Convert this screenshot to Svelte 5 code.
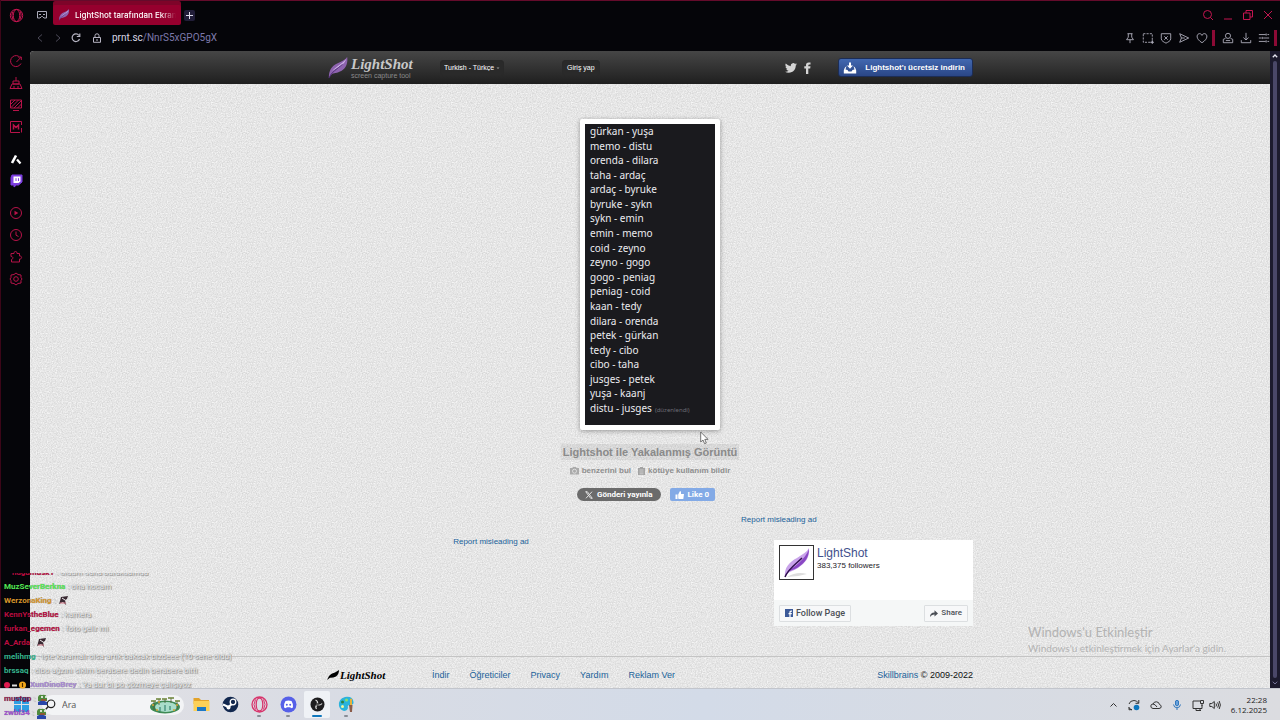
<script>
  const lines = [
    'gürkan - yuşa', 'memo - distu', 'orenda - dilara', 'taha - ardaç', 'ardaç - byruke',
    'byruke - sykn', 'sykn - emin', 'emin - memo', 'coid - zeyno', 'zeyno - gogo',
    'gogo - peniag', 'peniag - coid', 'kaan - tedy', 'dilara - orenda', 'petek - gürkan',
    'tedy - cibo', 'cibo - taha', 'jusges - petek', 'yuşa - kaanj', 'distu - jusges'
  ];

  const chat = [
    { name: 'hagumusk1', tone: 'crimson', text: 'oldum sana buraksamda', lead: true },
    { name: 'MuzSeverBerkna', tone: 'green', text: 'oha hocam' },
    { name: 'WerzonaKing', tone: 'orange', emote: 'gun' },
    { name: 'KennYstheBlue', tone: 'crimson', text: 'kamera' },
    { name: 'furkan_egemen', tone: 'crimson', text: 'foto gelir mi' },
    { name: 'A_Arda', tone: 'crimson', emote: 'gun' },
    { name: 'melihmg', tone: 'teal', text: 'işte karamalı olsa artık baksak bizdeee (10 sene oldu)' },
    { name: 'brssaq', tone: 'teal', text: 'cibo ağzını sikim berabere dedin berabere bitti' },
    { name: 'XunDinoBrey', tone: 'violet', text: 'Ya dur bi po çözmeye çalışıyoz', badges: true },
    { name: 'mustgp', tone: 'wine', emote: 'frog' },
    { name: 'zwbl34', tone: 'purple', emote: 'frog' }
  ];

  const footerLinks = ['İndir', 'Öğreticiler', 'Privacy', 'Yardım', 'Reklam Ver'];
  const sidebar = [
    ['speed', 'cleaner', 'wallpaper', 'mods'],
    ['aria', 'twitch'],
    ['player', 'history', 'extensions', 'settings']
  ];
  const tools = ['pin', 'snapshot', 'shield', 'send', 'heart'];
  const apps = [
    { id: 'folder' }, { id: 'steam' }, { id: 'opera', open: true }, { id: 'discord', open: true },
    { id: 'obs', open: true, active: true }, { id: 'paint', open: true }
  ];
</script>

{#snippet feather(size)}
  <svg width={size} height={size} viewBox="0 0 24 24" aria-hidden="true">
    <path d="M2 23 C2 14 5 10 11 7 C16 5 20 3 22 0 C23 6 21 12 16 15 C11 18 7 17 5 19 Z" fill="#8d63ae" />
    <path d="M5 16 C9 11 16 8 21 2 C19 8 14 11 6 15 Z" fill="#cdb2e6" />
    <path d="M2 23 C5 16 11 13 17 8" fill="none" stroke="#4b2a72" stroke-width="1" />
  </svg>
{/snippet}

{#snippet icon(id)}
  <svg class="ic" width="14" height="14" viewBox="0 0 14 14" aria-hidden="true">
    {#if id === 'speed'}
      <path d="M12 9.500 A5.500 5.500 0 1 1 9.600 2.200 M7.500 8 L12 3.200 M9 3 H12.300 V6" />
    {:else if id === 'cleaner'}
      <path d="M7 1 V5 M4 5 H10 V8 H4 Z M3 8 H11 L13 12.500 H1 Z M5 10 V12 M9 10 V12" />
    {:else if id === 'wallpaper'}
      <path d="M1.500 2 H12.500 V10 H1.500 Z M4 12.500 H10 M2 6 L6 2 M2 9.500 L9.500 2 M5 10 L12.500 2.500 M8.500 10 L12.500 6" />
    {:else if id === 'mods'}
      <path d="M11 12.500 H1.500 V1.500 H12.500 V5 M12.500 8 V12.500" /><path d="M4.500 9.500 V5 L7 7.500 L9.500 5 V9.500" stroke-width="1.500" />
    {:else if id === 'aria'}
      <path d="M3 11 L7 3.500" stroke="#fff" stroke-width="2.600" /><path d="M8 7.500 L11.500 11.500" stroke="#fff" stroke-width="2.200" />
    {:else if id === 'twitch'}
      <path d="M3 1 H13 V8 L9.500 11 H7.500 L5 13 V11 H2 V3.500 Z" fill="#7d3fe0" stroke="#7d3fe0" /><path d="M4.500 2.500 H11.500 V7.500 L9.500 9 H4.500 Z" fill="#fff" stroke="none" /><path d="M7 4.200 V7 M9.500 4.200 V7" stroke="#7d3fe0" />
    {:else if id === 'player'}
      <circle cx="7" cy="7" r="5.500" /><path d="M5.500 4.700 L9.300 7 L5.500 9.300 Z" fill="currentColor" stroke="none" />
    {:else if id === 'history'}
      <circle cx="7" cy="7" r="5.500" /><path d="M7 3.500 V7.200 L9.500 8.500" />
    {:else if id === 'extensions'}
      <path d="M2 3.500 H5 C4.500 .8 8.500 .8 8 3.500 H10.500 V6 C13.300 5.600 13.300 9.400 10.500 9 V12 H2.500 V9.500 C4.600 8.800 4.300 6.500 2 6.500 Z" />
    {:else if id === 'settings'}
      <path d="M5 2.500 L7 1 L9 2.500 L12 3 V5.500 L13 7 L12 8.500 V11 L9 11.500 L7 13 L5 11.500 L2 11 V8.500 L1 7 L2 5.500 V3 Z" /><circle cx="7" cy="7" r="2.300" />
    {:else if id === 'pin'}
      <path d="M4 2 H10 M5 2 V6 L3 9 H11 L9 6 V2 M7 9 V13" />
    {:else if id === 'snapshot'}
      <path d="M1.500 2 H12 V12 H1.500 Z" stroke-dasharray="2.500 1.300" /><path d="M12 9.500 V14 M9.800 12 H14" />
    {:else if id === 'shield'}
      <path d="M1.500 2 H12.500 V8 C12.500 10.500 9 12 7 13 C5 12 1.500 10.500 1.500 8 Z M5 5 L9 9 M9 5 L5 9" />
    {:else if id === 'send'}
      <path d="M2 2 L12.500 7 L2 12 L4 7 Z M4 7 H8" />
    {:else if id === 'heart'}
      <path d="M7 12.500 C-2 7 1.500 1 5 2 Q6.500 2.500 7 4 Q7.500 2.500 9 2 C12.500 1 16 7 7 12.500 Z" />
    {:else if id === 'profile'}
      <circle cx="7" cy="4.500" r="3" /><path d="M4 7.500 L1.500 8.500 V12.500 H12.500 V8.500 L10 7.500 M4.500 10 H9.500" />
    {:else if id === 'download'}
      <path d="M7 1 V9 M4 6.500 L7 9.300 L10 6.500 M1.500 9.500 V12.500 H12.500 V9.500" />
    {:else if id === 'menu'}
      <path d="M1 3 H9 M11 3 H13 M1 7 H4 M6 7 H13 M1 11 H9 M11 11 H13 M9.500 1.700 V4.300 M5 5.700 V8.300 M9.500 9.700 V12.300" />
    {/if}
  </svg>
{/snippet}

<div class="desktop">
  <div class="browser">
    <div class="titlebar">
      <button class="bare opera" aria-label="Menu">
        <svg width="15" height="15" viewBox="0 0 15 15"><circle cx="7.500" cy="7.500" r="6.200" /><ellipse cx="7.500" cy="7.500" rx="3.200" ry="6" /><path d="M3.500 4 Q2 7.500 4 11.500 M11.500 3.500 Q13 7.500 11 11.500" /></svg>
      </button>
      <button class="bare space" aria-label="Workspaces">
        <svg width="12" height="12" viewBox="0 0 12 12"><path d="M1.500 2.500 H10.500 V9 H8 L6.500 7.500 H5.500 L4 9 H1.500 Z M3 5.500 H5 M7 5.500 H9" /></svg>
      </button>
      <div class="tab">
        {@render feather(12)}
        <span class="tab-title">LightShot tarafından Ekran</span>
      </div>
      <button class="bare plus" aria-label="New tab"><svg width="7" height="7" viewBox="0 0 7 7"><path d="M3.500 0V7M0 3.500H7" /></svg></button>
      <div class="window-buttons">
        <button class="bare" aria-label="Search tabs"><svg width="12" height="12" viewBox="0 0 12 12"><circle cx="5.500" cy="5.500" r="4" /><path d="M8.500 8.500 L11 11" /></svg></button>
        <button class="bare" aria-label="Minimise"><svg width="12" height="12" viewBox="0 0 12 12"><path d="M2 10 H10" /></svg></button>
        <button class="bare" aria-label="Restore"><svg width="12" height="12" viewBox="0 0 12 12"><path d="M1.500 4 H8 V10.500 H1.500 Z M4 4 V1.500 H10.500 V8 H8" /></svg></button>
        <button class="bare" aria-label="Close"><svg width="12" height="12" viewBox="0 0 12 12"><path d="M2 2 L10 10 M10 2 L2 10" /></svg></button>
      </div>
    </div>

    <div class="toolbar">
      <button class="bare dim" aria-label="Back"><svg width="10" height="10" viewBox="0 0 10 10"><path d="M7 1.500 L3 5 L7 8.500" /></svg></button>
      <button class="bare dim" aria-label="Forward"><svg width="10" height="10" viewBox="0 0 10 10"><path d="M3 1.500 L7 5 L3 8.500" /></svg></button>
      <button class="bare" aria-label="Reload"><svg width="10" height="10" viewBox="0 0 10 10"><path d="M8.500 6 A3.800 3.800 0 1 1 8 2.500 M8.800 .5 V3.500 H5.800" stroke-width="1.200" /></svg></button>
      <button class="bare lock" aria-label="Site information"><svg width="10" height="10" viewBox="0 0 10 10"><path d="M1.500 4.500 H8.500 V9.300 H1.500 Z M3 4.500 V2.500 Q3 .8 5 .8 Q7 .8 7 2.500 V4.500 M5 6 V8" /></svg></button>
      <button class="bare address" aria-label="Address">prnt.sc<span>/NnrS5xGPO5gX</span></button>
      <div class="tools">
        {#each tools as id}<button class="bare" aria-label={id}>{@render icon(id)}</button>{/each}
        <i class="mark"></i>
        {#each ['profile', 'download', 'menu'] as id}<button class="bare" aria-label={id}>{@render icon(id)}</button>{/each}
        <i class="mark"></i>
      </div>
    </div>

    <div class="body">
      <nav class="sidebar" aria-label="Sidebar">
        {#each sidebar as group}
          <div class="group">
            {#each group as id}<button class="bare" aria-label={id}>{@render icon(id)}</button>{/each}
          </div>
        {/each}
      </nav>

      <div class="page">
        <header>
          <div class="wrap head">
            <a class="logo" href="#home">
              {@render feather(24)}
              <span class="words"><b>LightShot</b><small>screen capture tool</small></span>
            </a>
            <div class="language">
              <select aria-label="Language"><option>Turkish - Türkçe</option></select>
              <svg width="4" height="4" viewBox="0 0 4 4"><path d="M.5 1.500 H3.500 L2 3 Z" fill="#999" /></svg>
            </div>
            <button class="sign-in">Giriş yap</button>
            <div class="social">
              <a href="#twitter" aria-label="Twitter"><svg width="12" height="12" viewBox="0 0 24 24"><path fill="#d5d5d5" d="M23.900 4.600a10 10 0 0 1-2.800.8 4.900 4.900 0 0 0 2.100-2.700 9.900 9.900 0 0 1-3.100 1.200 4.900 4.900 0 0 0-8.400 4.500A14 14 0 0 1 1.600 3.200a4.900 4.900 0 0 0 1.500 6.500 4.900 4.900 0 0 1-2.200-.6v.1a4.900 4.900 0 0 0 3.900 4.800 5 5 0 0 1-2.200.1 4.900 4.900 0 0 0 4.600 3.400A9.900 9.900 0 0 1 0 19.500a14 14 0 0 0 7.500 2.200c9.100 0 14-7.500 14-14v-.6a10 10 0 0 0 2.400-2.500z" /></svg></a>
              <a href="#facebook" aria-label="Facebook"><svg width="7" height="12" viewBox="0 0 7 12"><path fill="#d5d5d5" d="M2 12V6.500H.3V4.300H2V3Q2 .5 4.600.5H6.500V2.600H5.200Q4.300 2.600 4.300 3.400V4.300H6.500L6.200 6.500H4.300V12Z" /></svg></a>
            </div>
            <a class="get" href="#download">
              <svg width="14" height="12" viewBox="0 0 14 12"><path fill="#fff" d="M6 0.500H8V3.500H10L7 6.800L4 3.500H6ZM3.500 4Q1 6 .8 8.500V11.500H13.200V8.500Q13 6 10.500 4L11.500 7.500L9.500 8L8.500 9.500H5.500L4.500 8L2.500 7.500Z" /></svg>
              <span>Lightshot'ı ücretsiz indirin</span>
            </a>
          </div>
        </header>

        <main>
          <div class="shot">
            <ul>
              {#each lines as line, i}
                <li>{line}{#if i === lines.length - 1}<small>(düzenlendi)</small>{/if}</li>
              {/each}
            </ul>
          </div>
          <h1>Lightshot ile Yakalanmış Görüntü</h1>
          <div class="actions">
            <a href="#similar"><svg width="9" height="8" viewBox="0 0 9 8"><path d="M0 1H2.500L3 0H6L6.500 1H9V7.500H0Z" fill="#aaa" /><circle cx="4.500" cy="4.200" r="2" fill="none" stroke="#ddd" /></svg>benzerini bul</a>
            <a href="#abuse"><svg width="7" height="8" viewBox="0 0 7 8"><path d="M0 1H2V0H5V1H7V8H0Z" fill="#a3a3a3" /><path d="M1.500 3H5.500M1.500 5H5.500M1.500 6.800H5.500" stroke="#d5d5d5" stroke-width=".8" /></svg>kötüye kullanım bildir</a>
          </div>
          <div class="share-row">
            <button class="post"><svg width="8" height="8" viewBox="0 0 8 8"><path d="M.7.7H2.300L7.300 7.300H5.700Z M7 .7L4.500 3.500M3.400 4.600L1 7.300" fill="none" stroke="#fff" stroke-width=".8" /></svg>Gönderi yayınla</button>
            <button class="like"><svg width="10" height="10" viewBox="0 0 10 10"><path fill="#fff" d="M.5 4.500H2.500V9H.5ZM3.200 4.500L5 1Q6.300 1 6 4H9L8.300 9H4L3.200 8.400Z" /></svg>Like 0</button>
          </div>

          <div class="wrap lower">
            <a class="report first" href="#report-left">Report misleading ad</a>
            <aside>
              <a class="report" href="#report-right">Report misleading ad</a>
              <section class="fb">
                <div class="fb-top">
                  <div class="avatar">
                    <svg width="33" height="33" viewBox="0 0 33 33">
                      <path d="M7 31 Q17 25 27 28 Q17 31 7 31Z" fill="#ddd" />
                      <path d="M5 31 C4 22 9 16 17 12 C23 8 27 6 29 2 C30 12 25 17 18 22 C12 26 8 25 5 31Z" fill="#c9a3ea" />
                      <path d="M7 26 C14 21 25 14 29 3 C29 13 23 19 15 23Z" fill="#8a48c4" />
                      <path d="M5 31 C8 23 16 18 22 12" fill="none" stroke="#30104d" stroke-width="1.500" />
                    </svg>
                  </div>
                  <div class="fb-name"><a href="#page">LightShot</a><span>383,375 followers</span></div>
                </div>
                <div class="fb-bottom">
                  <button class="follow"><svg width="8" height="8" viewBox="0 0 8 8"><path fill="#3b5998" d="M0 0H8V8H0Z" /><path d="M5 8V3.200Q5 2 7 2.200M3.500 4.600H6.800" fill="none" stroke="#fff" stroke-width="1.200" /></svg>Follow Page</button>
                  <button class="share"><svg width="8" height="7" viewBox="0 0 8 7"><path fill="#4b4f56" d="M0 7Q0 2.500 4.500 2.500V.3L8 3.500L4.500 6.500V4.500Q1.500 4.300 0 7Z" /></svg>Share</button>
                </div>
              </section>
            </aside>
          </div>
        </main>

        <footer>
          <div class="wrap foot">
            <a class="foot-logo" href="#top">
              <svg width="12" height="10" viewBox="0 0 12 10"><path d="M0 10L2 6Q4 3 8 2.500L12 0Q12 4 9 6.500Q6 8 3 7.800Z" fill="#000" /></svg>
              <b>LightShot</b>
            </a>
            <nav>{#each footerLinks as label}<a href="#{label}">{label}</a>{/each}</nav>
            <p><a href="#skillbrains">Skillbrains</a> © 2009-2022</p>
          </div>
        </footer>
      </div>

      <div class="scrollbar" aria-hidden="true">
        <svg width="6" height="4" viewBox="0 0 6 4"><path d="M.8 3.300L3 1L5.200 3.300" stroke="#e5e5f0" stroke-width="1.300" /></svg>
        <i></i>
        <svg width="6" height="4" viewBox="0 0 6 4"><path d="M.8 .7L3 3L5.200 .7" stroke="#77759a" /></svg>
      </div>
    </div>
  </div>

  <div class="taskbar">
    <button class="bare start" aria-label="Start"><svg width="15" height="15" viewBox="0 0 15 15"><path d="M0 0H7V7H0ZM8 0H15V7H8ZM0 8H7V15H0ZM8 8H15V15H8Z" fill="#2f9fe3" /></svg></button>
    <div class="search">
      <svg width="11" height="11" viewBox="0 0 11 11"><circle cx="6" cy="4.800" r="3.800" fill="none" stroke="#222" stroke-width="1.200" /><path d="M3.300 7.500L.8 10.300" stroke="#222" stroke-width="1.300" /></svg>
      <input aria-label="Ara" placeholder="Ara" />
      <svg width="33" height="18" viewBox="0 0 33 18">
        <ellipse cx="16" cy="11" rx="15" ry="6.500" fill="#3e8a55" />
        <ellipse cx="17" cy="11" rx="11" ry="5" fill="#a9ddca" />
        <path d="M5 14V5M10 9V3M16 7V3M22 7V2M28 13V5" stroke="#4b5a35" stroke-width=".8" />
        <path d="M2 5H7M7 3H12M13 3H18M19 2H25M26 5H31" stroke="#6a8136" stroke-width="1.500" />
        <path d="M11 15V11M16 15V9M21 14V10" stroke="#4f9685" stroke-width="1.500" />
        <path d="M3 9H5M9 6H11M27 9H29M7 14H9M24 14H26" stroke="#d7a534" stroke-width="1.500" />
      </svg>
    </div>
    <div class="apps">
      {#each apps as app}
        <button class="bare app" class:open={app.open} class:active={app.active} aria-label={app.id}>
          <svg width="17" height="17" viewBox="0 0 17 17">
            {#if app.id === 'folder'}
              <path d="M.5 2H6L8 4H16V8H.5Z" fill="#e3a32a" /><path d="M.5 5H16.500V15H.5Z" fill="#fcd057" /><path d="M4 11H13V15H4Z" fill="#1c78c6" />
            {:else if app.id === 'steam'}
              <circle cx="8.500" cy="8.500" r="7.800" fill="#12284f" /><path d="M1 8.500L6.500 11L12 6" stroke="#fff" stroke-width="2" fill="none" /><circle cx="11" cy="6" r="2.800" fill="#12284f" stroke="#fff" stroke-width="1.300" /><circle cx="6.500" cy="11.500" r="2" fill="#fff" />
            {:else if app.id === 'opera'}
              <g fill="none" stroke="#d8336b"><circle cx="8.500" cy="8.500" r="7.500" stroke-width="1.300" /><ellipse cx="8.500" cy="8.500" rx="3.300" ry="6.500" stroke-width="1.300" /><path d="M4.500 3.500Q1.500 8.500 4.500 13.500M12.500 3.500Q15.500 8.500 12.500 13.500" /></g>
            {:else if app.id === 'discord'}
              <circle cx="8.500" cy="8.500" r="8" fill="#5660e8" /><path d="M5.500 5Q8.500 4 11.500 5Q13.500 8 13 11.500L11 12.300L10.300 11.300H6.700L6 12.300L4 11.500Q3.500 8 5.500 5Z" fill="#fff" /><circle cx="6.800" cy="8.800" r="1" fill="#5660e8" /><circle cx="10.200" cy="8.800" r="1" fill="#5660e8" />
            {:else if app.id === 'obs'}
              <circle cx="8.500" cy="8.500" r="7" fill="#1d1d1f" /><path d="M8.500 7.500Q9 5 6.500 4M9 8.800Q11.500 9.500 13 7.500M7.800 9Q6 11 7.500 13" stroke="#ddd" stroke-width="1.200" fill="none" /><circle cx="8.500" cy="8.500" r="1.500" fill="#555" />
            {:else}
              <path d="M1 10Q0 3 7 1Q15 0 15.500 6Q16 9 12 9Q9 9 10 12Q9 15 6 15Q2 14 1 10Z" fill="#2ab3dc" /><circle cx="4.500" cy="6" r="1.500" fill="#2d7f45" /><circle cx="8.500" cy="4" r="1.500" fill="#8adf6a" /><circle cx="4.500" cy="10.500" r="1.500" fill="#f0f7a0" /><path d="M12 3L14 2.500V9H12Z" fill="#e7b13c" /><path d="M11 9H14.500L14 16H12Z" fill="#8b5c4a" />
            {/if}
          </svg>
        </button>
      {/each}
    </div>
    <div class="tray">
      <svg width="9" height="14" viewBox="0 0 9 14"><path d="M1.500 8.500L4.500 5.500L7.500 8.500" /></svg>
      <svg width="12" height="14" viewBox="0 0 12 14"><path d="M1 6Q2 2.500 6 2.500Q9 2.500 10.500 5M10.800 2V5.300H7.500M4 11.500L1 11.800V9M1 9.500Q2 11.500 4 12" /><circle cx="8.500" cy="9.500" r="2.800" fill="#0d76bd" stroke="none" /></svg>
      <svg width="12" height="14" viewBox="0 0 12 14"><path d="M3 10.500Q.8 10.300 .8 8Q1 6 3 6Q4 3.500 6.500 3.800Q9 4 9.500 6.500Q11.300 7 11.200 8.800Q11 10.500 9 10.500ZM3 6Q5 6 7 9" /></svg>
      <svg width="10" height="14" viewBox="0 0 10 14"><path d="M3.500 3Q5 1.500 6.500 3V7Q5 9 3.500 7Z" fill="#67a1dc" stroke="#3379bd" /><path d="M1.500 6.500Q2 9.800 5 9.800Q8 9.800 8.500 6.500M5 10V12" stroke="#3379bd" /></svg>
      <span class="pair">
        <svg width="12" height="14" viewBox="0 0 12 14"><path d="M8 3H1V10.500H10V7M4 12.500H9M4 11V12.500M8 11V12.500M8.500 2.500H11.500V5.500H8.500ZM10 5.500V8" /></svg>
        <svg width="12" height="14" viewBox="0 0 12 14"><path d="M.8 5.500H2.800L5.300 3.500V10.500L2.800 8.500H.8ZM7 5.500Q8 7 7 8.500M8.700 4.300Q10.400 7 8.700 9.700M10.200 3Q12.600 7 10.200 11" /></svg>
      </span>
      <time>22:28<br />6.12.2025</time>
    </div>
  </div>

  <div class="chat">
    {#each chat as row}
      <div class="row">
        {#if row.badges}
          <svg class="badges" width="24" height="8" viewBox="0 0 24 8"><circle cx="3" cy="4" r="3" fill="#e01a4f" /><path d="M8 4.500H13" stroke="#ddd" stroke-width="2" /><circle cx="18.500" cy="4" r="3.500" fill="#f2a81d" /><path d="M18.500 2V6" stroke="#4b2d00" stroke-width="1.200" /></svg>
        {/if}
        <b class="{row.tone}" class:lead={row.lead}>{row.name}</b>
        <span>:</span>
        {#if row.text}<span>{row.text}</span>{/if}
        {#if row.emote === 'gun'}
          <svg width="10" height="10" viewBox="0 0 10 10"><path d="M3 1L10 0L9 3L7 4L8 9L5 6L1 8L2 5Z" fill="#3a2a33" /><path d="M2 7H8" stroke="#d87c8c" /><path d="M4 2L7 4" stroke="#eee" /></svg>
        {:else if row.emote === 'frog'}
          <svg width="11" height="11" viewBox="0 0 11 11"><path d="M1 3Q2 0 5 1Q9 0 10 3V7H1Z" fill="#4f8a3d" /><path d="M1 8Q5 5 10 8V11H1Z" fill="#2946a8" /><path d="M4 3H6M8 3H10" stroke="#fff" stroke-width="1.600" /><path d="M4 6H9" stroke="#a3482e" stroke-width="1.500" /></svg>
        {/if}
      </div>
    {/each}
  </div>

  <div class="watermark"><strong>Windows'u Etkinleştir</strong><span>Windows'u etkinleştirmek için Ayarlar'a gidin.</span></div>

  <svg class="cursor" width="9" height="14" viewBox="0 0 9 14" aria-hidden="true"><path d="M.7 1V11L3 9L4.600 12.700L6.300 12L4.800 8.400H8Z" fill="#fff" stroke="#555" stroke-width=".8" /></svg>
</div>

<style>
  :global(body) { margin: 0; background: #050509; }
  .desktop { position: relative; display: flex; flex-direction: column; min-height: 100vh; overflow: hidden; background: #050509; font-family: "Liberation Sans", Arial, sans-serif; }
  a { text-decoration: none; color: #20629a; }
  button, input, select { font: inherit; color: inherit; }
  button { display: flex; align-items: center; justify-content: center; cursor: pointer; }
  svg { display: block; flex: none; }
  .bare { padding: 0; border: 0; background: none; }
  .titlebar svg, .toolbar svg, .sidebar svg, .scrollbar svg { fill: none; stroke: currentColor; }
  .titlebar .tab svg { stroke: none; }

  .browser { flex: 1; display: flex; flex-direction: column; border-left: 1px solid #3c0618; }
  .titlebar { display: flex; align-items: center; height: 24px; padding: 2px 6px 0 7px; border-top: 1px solid #650b2b; color: #c51550; }
  .opera { width: 16px; }
  .space { width: 29px; padding-left: 6px; color: #aaa9b8; }
  .tab { display: flex; align-items: center; gap: 5px; box-sizing: border-box; width: 128px; height: 20px; padding: 0 5px; border-radius: 2px; background: #96002e; box-shadow: 0 -4px #7e0429; }
  .tab-title { flex: 1; min-width: 0; overflow: hidden; white-space: nowrap; color: #fff; font: 500 8px/14px Inter, sans-serif; mask-image: linear-gradient(90deg, #000 85%, transparent); }
  .plus { width: 11px; height: 11px; margin-left: 3px; border-radius: 2px; background: #211d38; color: #dddbea; }
  .window-buttons { display: flex; gap: 8px; margin-left: auto; }

  .toolbar { display: flex; align-items: center; height: 22px; padding: 0 2px 0 34px; gap: 8px; color: #b7b5c3; }
  .dim { color: #4c4a58; }
  .lock { margin-left: 3px; }
  .address { margin-left: 2px; color: #d9d8e4; font: 10px/14px Roboto, sans-serif; }
  .address span { color: #7d79ab; }
  .tools { display: flex; align-items: center; gap: 6px; margin-left: auto; }
  .tools .bare { width: 12px; }
  .tools .ic { width: 12px; height: 12px; }
  .mark { width: 3px; height: 16px; margin: 0 1px 0 -2px; background: #8c0a35; }

  .body { flex: 1; display: flex; }
  .sidebar { display: flex; flex-direction: column; gap: 10px; width: 29px; padding-top: 1px; color: #b81349; }
  .group { display: flex; flex-direction: column; }
  .group .bare { height: 22px; }
  .sidebar .ic { width: 14px; height: 14px; }
  .scrollbar { display: flex; flex-direction: column; align-items: center; gap: 3px; width: 10px; margin-top: 2px; padding: 3px 0; box-sizing: border-box; background: #1c1a2d; }
  .scrollbar i { flex: 1; width: 4px; border-radius: 2px; background: #4a4768; }

  .page { flex: 1; display: flex; flex-direction: column; margin-top: 2px; border-radius: 4px 0 0 0; overflow: hidden; background-color: #e4e4e4;
    background-image: url("data:image/svg+xml,%3Csvg xmlns='http://www.w3.org/2000/svg' width='120' height='120'%3E%3Cfilter id='n' color-interpolation-filters='sRGB'%3E%3CfeTurbulence type='fractalNoise' baseFrequency='.8' numOctaves='2' stitchTiles='stitch'/%3E%3CfeColorMatrix values='.2 0 0 0 .8 .2 0 0 0 .8 .2 0 0 0 .8 0 0 0 0 1'/%3E%3C/filter%3E%3Crect width='120' height='120' filter='url(%23n)'/%3E%3C/svg%3E"); }
  .wrap { width: 100%; max-width: 646px; margin: 0 auto; }
  header { background: linear-gradient(#464646, #1f1f1f); }
  .head { display: flex; align-items: center; height: 33px; color: #fff; font-size: 7px; }
  .logo { display: flex; align-items: center; gap: 2px; width: 113px; }
  .logo svg { width: 22px; height: 24px; }
  .words { display: flex; flex-direction: column; color: #c8c8c8; white-space: nowrap; }
  .words b { font: italic bold 15px/15px "Liberation Serif", serif; }
  .words small { color: #8b8b8b; font-size: 7px; line-height: 7px; }
  .language { display: flex; align-items: center; box-sizing: border-box; width: 64px; height: 16px; padding: 0 3px; border: 1px solid #292929; border-radius: 3px; background: #2a2a2a; }
  .language select { appearance: none; flex: 1; min-width: 0; padding: 0; border: 0; background: none; color: #fff; }
  .sign-in { height: 16px; margin-left: 58px; padding: 0 4px; border: 1px solid #292929; border-radius: 3px; background: #2a2a2a; color: #fff; }
  .social { display: flex; align-items: center; gap: 7px; margin: 0 27px 0 auto; }
  .get { display: flex; align-items: center; gap: 8px; box-sizing: border-box; height: 19px; padding: 0 7px 0 4px; border: 1px solid #1c2d56; border-radius: 3px; background: linear-gradient(#4268b0, #2a4686); color: #fff; font-size: 8px; font-weight: bold; }

  main { flex: 1; display: flex; flex-direction: column; align-items: center; padding: 35px 0 30px; }
  .shot { box-sizing: border-box; width: 140px; border: 5px solid #fff; border-radius: 2px; background: #1a1a1e; box-shadow: 0 1px 5px rgba(0, 0, 0, .35); }
  .shot ul { display: flex; flex-direction: column; justify-content: space-between; min-height: 293px; margin: 0; padding: 0 5px 8px; list-style: none; color: #ececf0; font: 10px/14px "Noto Sans", sans-serif; white-space: nowrap; }
  .shot small { margin-left: 3px; color: #6c6c74; font-size: 6px; }
  h1 { margin: 14px 0 5px; padding: 0 2px; background: rgba(0, 0, 0, .06); color: #8a8a8a; font-size: 11px; line-height: 16px; }
  .actions { display: flex; gap: 7px; font-size: 8px; line-height: 12px; font-weight: bold; }
  .actions a { display: flex; align-items: center; gap: 3px; color: #8e8e8e; }
  .share-row { display: flex; gap: 9px; margin: 11px 0 14px; padding-right: 8px; font: bold 8px/13px Roboto, sans-serif; color: #fff; }
  .share-row button { height: 13px; border: 0; }
  .post { gap: 4px; padding: 0 8px; border-radius: 7px; background: #6b6b6b; }
  .like { gap: 3px; padding: 0 6px 0 5px; border-radius: 2px; background: #83aae6; }
  .lower { display: grid; grid-template-columns: 328px 1fr 232px; }
  .report { font-size: 8px; line-height: 10px; }
  .first { padding-top: 22px; text-align: center; }
  aside { grid-column: 3; display: flex; flex-direction: column; align-items: flex-start; gap: 15px; }
  .fb { align-self: flex-end; width: 199px; background: #fff; }
  .fb-top { display: flex; gap: 3px; min-height: 55px; padding: 5px 5px 0; }
  .avatar { width: 33px; height: 33px; border: 1px solid #333; }
  .fb-name { display: flex; flex-direction: column; color: #1d2129; font-size: 8px; line-height: 10px; }
  .fb-name a { color: #424f8c; font-size: 12px; line-height: 16px; }
  .fb-bottom { display: flex; justify-content: space-between; align-items: center; height: 26px; padding: 0 5px; background: #f5f7f7; color: #4b4f56; }
  .fb-bottom button { height: 17px; padding: 0 5px; gap: 3px; border: 1px solid #dcdfe1; border-radius: 1px; background: #f7f8f9; font: 500 9px/14px Roboto, sans-serif; }
  .fb-bottom .share { font-size: 8px; }

  footer { border-top: 1px solid #c4c4c4; }
  .foot { display: flex; align-items: center; height: 31px; padding-top: 4px; box-sizing: border-box; font-size: 9px; line-height: 12px; }
  .foot-logo { display: flex; align-items: center; gap: 1px; width: 105px; color: #000; }
  .foot-logo b { font: italic bold 11px/12px "Liberation Serif", serif; }
  .foot nav { display: flex; gap: 20px; }
  .foot p { margin: 0 0 0 auto; color: #111; }

  .taskbar { display: flex; align-items: center; height: 31px; border-top: 1px solid #c2c5cc; background: linear-gradient(90deg, #e4e2e5, #d9dce4 25%, #d3dbe8 55%, #dbdce0); }
  .start { width: 42px; }
  .search { display: flex; align-items: center; gap: 6px; box-sizing: border-box; width: 142px; height: 20px; padding: 0 2px 0 3px; border-radius: 10px; background: #f3f4f6; }
  .search input { flex: 1; min-width: 0; padding: 0; border: 0; outline: 0; background: none; font: 9px/14px "Open Sans", sans-serif; }
  .search input::placeholder { color: #555; opacity: 1; }
  .apps { display: flex; gap: 3px; margin-left: 4px; }
  .app { position: relative; width: 26px; height: 27px; border-radius: 2px; }
  .app.active { background: #eff2f6; }
  .app.open::after { content: ""; position: absolute; bottom: 1px; left: 11px; width: 4px; height: 2px; border-radius: 1px; background: #888d96; }
  .app.active::after { left: 8px; width: 10px; background: #0f77bd; }
  .tray { display: flex; align-items: center; gap: 10px; margin-left: auto; padding-right: 13px; }
  .tray svg { fill: none; stroke: #333; }
  .pair { display: flex; gap: 5px; }
  time { color: #222; font: 8px/10px "Open Sans", sans-serif; text-align: right; }

  .chat { position: absolute; left: 4px; top: 573px; display: flex; flex-direction: column; justify-content: flex-end; height: 147px; overflow: hidden; font: 8px/14px Roboto, sans-serif; color: #f2f2f2; white-space: nowrap; text-shadow: 0 0 1px #666, 1px 1px 1px #888; }
  .row { display: flex; align-items: center; flex: none; gap: 2px; height: 14px; }
  .row b { text-shadow: 0 0 1px rgba(0, 0, 0, .4); }
  .lead { padding-left: 8px; }
  .crimson { color: #b80d40; }
  .green { color: #55e855; }
  .orange { color: #d9972b; }
  .teal { color: #36b58f; }
  .violet { color: #a98ad6; }
  .wine { color: #8e1747; }
  .purple { color: #a04fd0; }

  .watermark { position: absolute; right: 54px; bottom: 65px; display: flex; flex-direction: column; color: #b3b3b3; font: 10px/14px Lato, sans-serif; }
  .watermark strong { font-weight: 400; font-size: 13px; line-height: 17px; }
  .cursor { position: absolute; left: 700px; top: 431px; }
</style>
